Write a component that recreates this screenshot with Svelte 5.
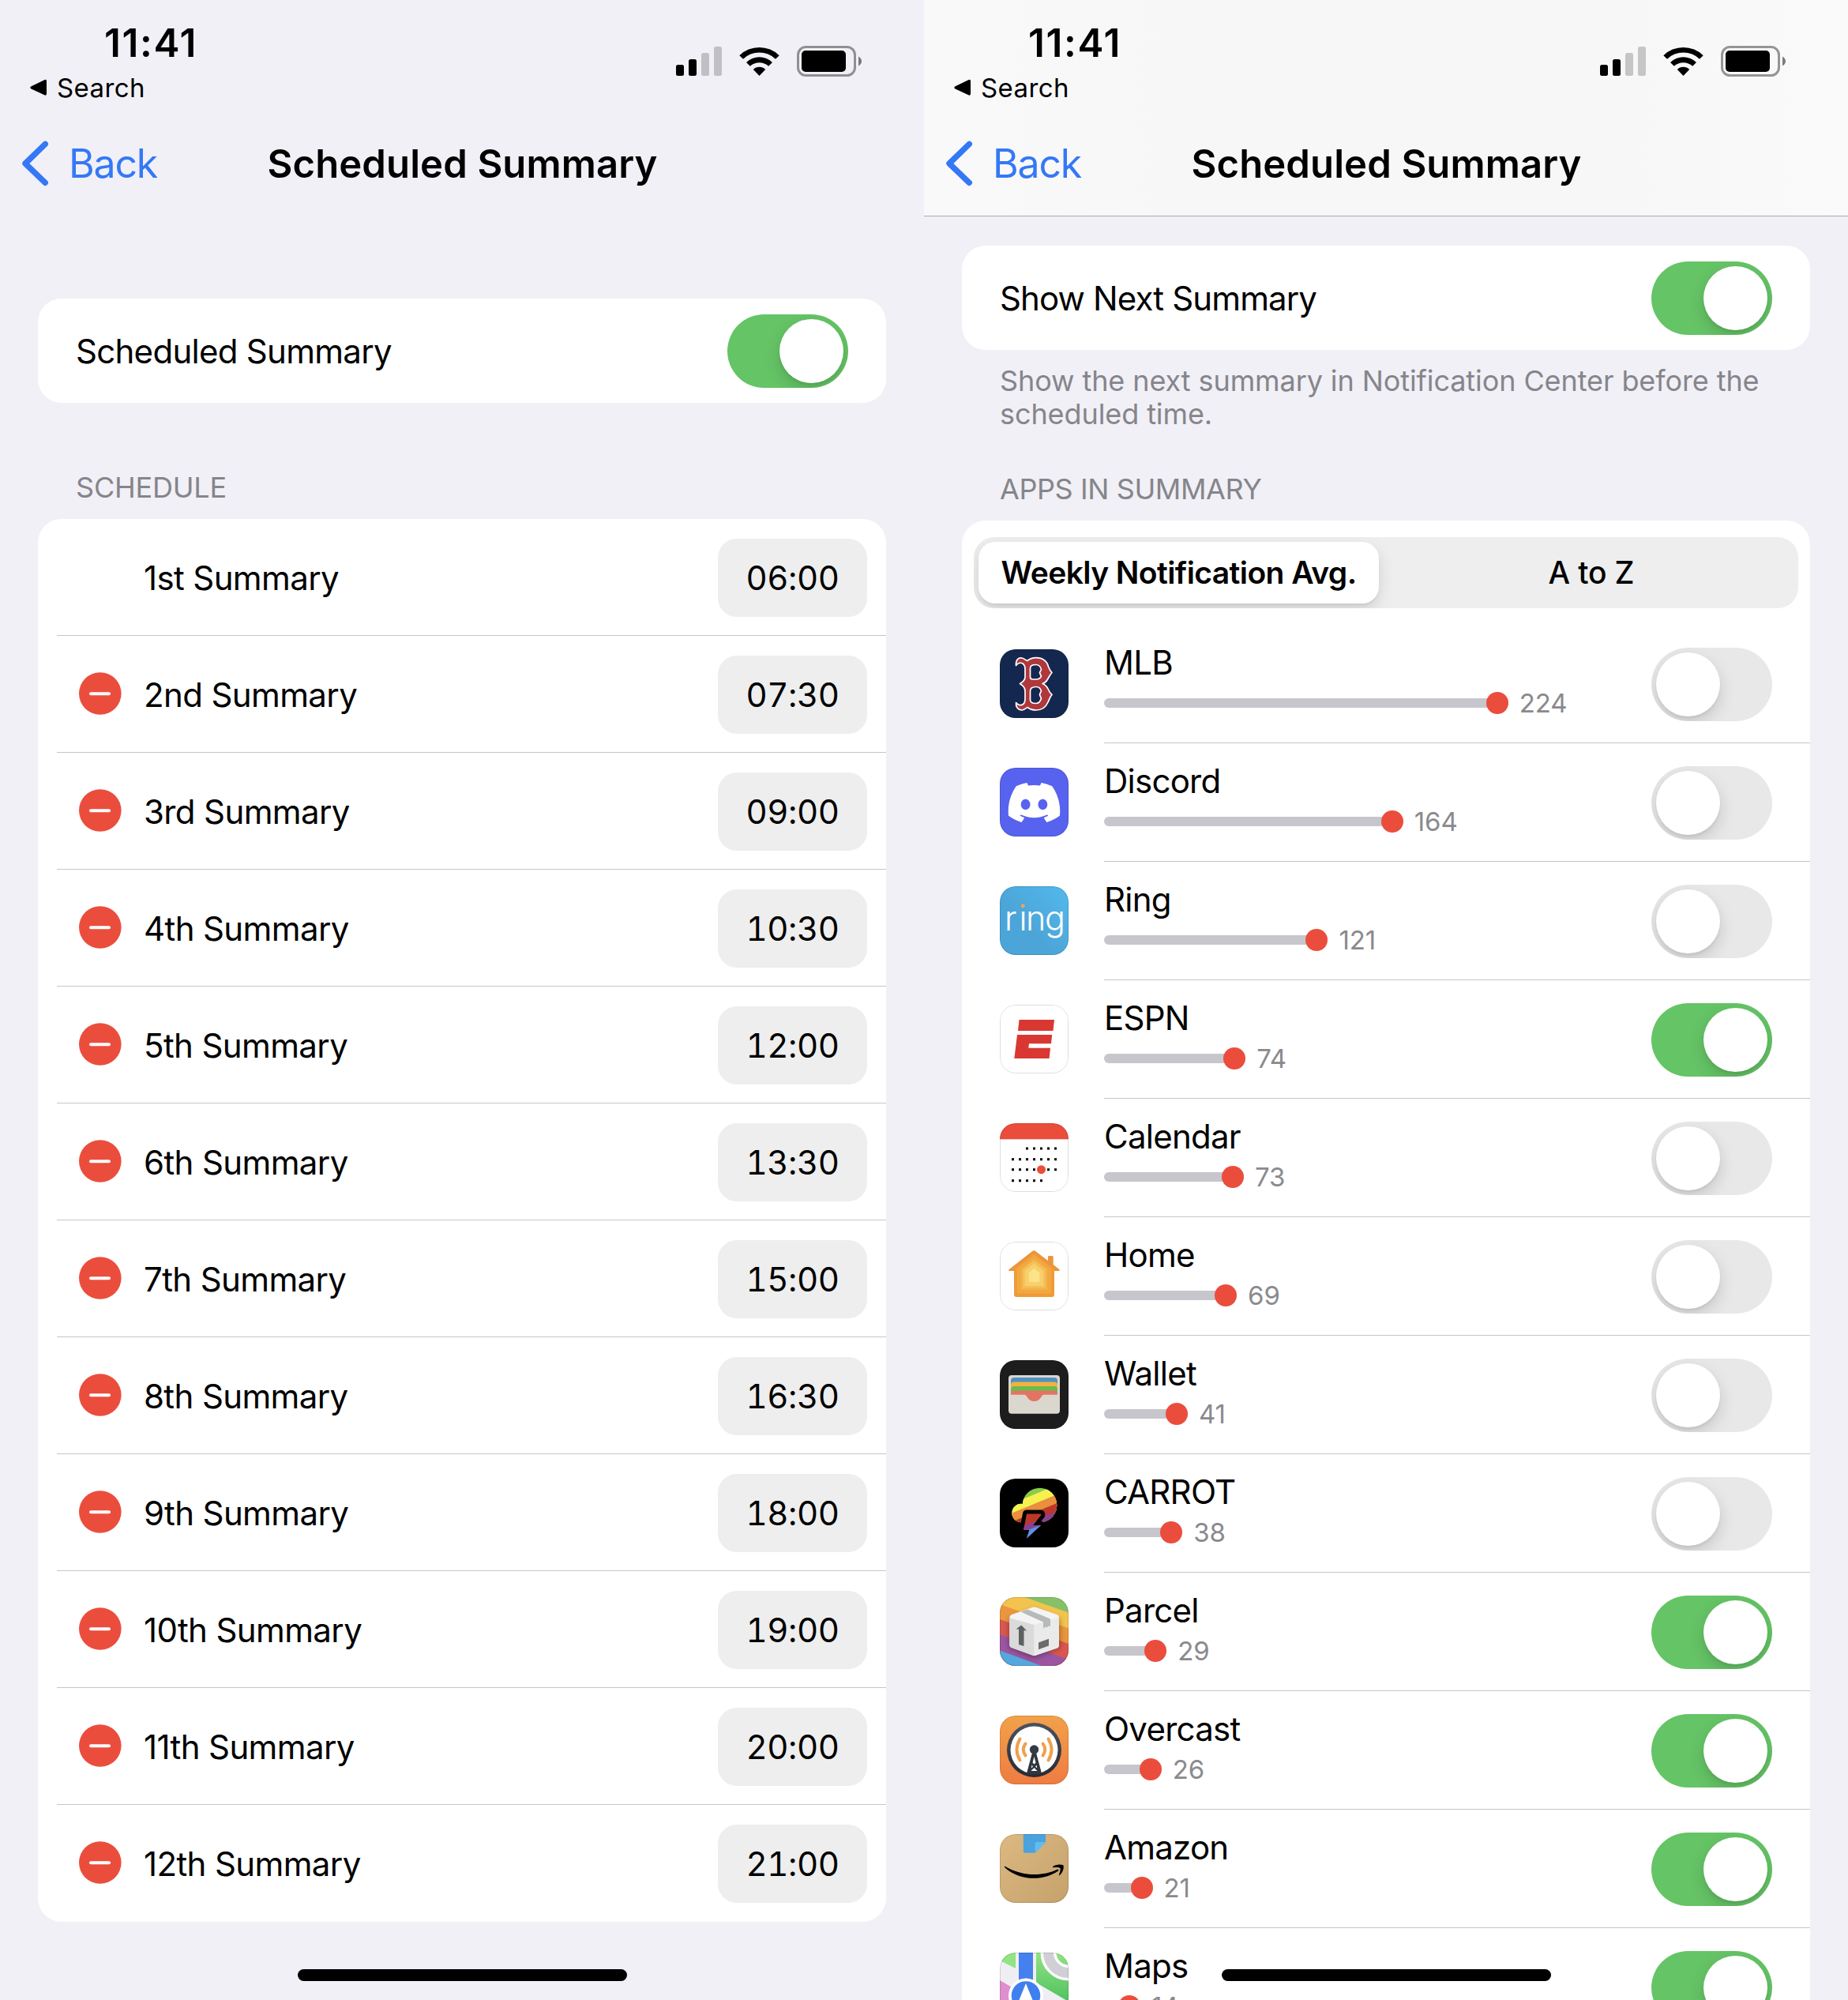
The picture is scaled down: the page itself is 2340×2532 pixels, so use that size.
<script>
  const schedule = [
    ['1st Summary', '06:00'],
    ['2nd Summary', '07:30'],
    ['3rd Summary', '09:00'],
    ['4th Summary', '10:30'],
    ['5th Summary', '12:00'],
    ['6th Summary', '13:30'],
    ['7th Summary', '15:00'],
    ['8th Summary', '16:30'],
    ['9th Summary', '18:00'],
    ['10th Summary', '19:00'],
    ['11th Summary', '20:00'],
    ['12th Summary', '21:00'],
  ];

  const apps = [
    { name: 'MLB', count: 224, on: false },
    { name: 'Discord', count: 164, on: false },
    { name: 'Ring', count: 121, on: false },
    { name: 'ESPN', count: 74, on: true },
    { name: 'Calendar', count: 73, on: false },
    { name: 'Home', count: 69, on: false },
    { name: 'Wallet', count: 41, on: false },
    { name: 'CARROT', count: 38, on: false },
    { name: 'Parcel', count: 29, on: true },
    { name: 'Overcast', count: 26, on: true },
    { name: 'Amazon', count: 21, on: true },
    { name: 'Maps', count: 14, on: true },
  ];

  // Dots printed on the Calendar icon: [x, y] of each day
  const calendarDots = [];
  const ranges = [[2, 6], [0, 6], [0, 6], [0, 4]];
  ranges.forEach(([from, to], row) => {
    for (let col = from; col <= to; col++) {
      if (!(row === 2 && col === 4)) calendarDots.push([16.5 + col * 9, [32, 45.7, 58.7, 72.7][row]]);
    }
  });

  // Length of the grey line, up to the far edge of its 28px end dot
  const barWidth = (count) => count * 2.218 + 15;
</script>

{#snippet header(raised)}
  <header class:raised>
    <div class="status">
      <div class="left">
        <div class="clock">11:41</div>
        <div class="crumb">
          <svg width="22" height="22" viewBox="0 0 22 22"><path d="M1.6 9.2 18.2 1.2Q21 0 21 3V18.600Q21 21.600 18.200 20.300L1.600 12.500Q-1 10.900 1.600 9.200Z" /></svg>
          <span>Search</span>
        </div>
      </div>
      <svg class="radio" width="238" height="40" viewBox="0 0 238 40">
        <rect x="0" y="24" width="10" height="14" rx="2.500" />
        <rect x="16" y="17" width="10" height="21" rx="2.500" />
        <rect x="32" y="9" width="10" height="29" rx="2.500" opacity=".2" />
        <rect x="48" y="1" width="10" height="37" rx="2.500" opacity=".2" />
        <path d="M80.300 12.200A36 36 0 0 1 130.700 12.200L126 16.800A29.300 29.300 0 0 0 85 16.800Z" />
        <path d="M89 21A23.500 23.500 0 0 1 122 21L117.200 25.800A17 17 0 0 0 93.800 25.800Z" />
        <path d="M97.800 30A11 11 0 0 1 113.200 30L105.500 38Z" />
        <rect x="154.500" y="1.500" width="72" height="36" rx="10" fill="none" stroke="#000" stroke-opacity=".4" stroke-width="3" />
        <rect x="159" y="6" width="56" height="27" rx="5" />
        <path d="M231 13.500Q235 16 235 19.500Q235 23 231 25.500Z" opacity=".5" />
      </svg>
    </div>
    <nav>
      <div class="back">
        <svg width="34" height="58" viewBox="0 0 34 58"><path d="M29.300 4.300 4 29 29.300 53.300" fill="none" stroke="#3478f6" stroke-width="7.400" stroke-linecap="round" stroke-linejoin="round" /></svg>
        <span>Back</span>
      </div>
      <h1>Scheduled Summary</h1>
    </nav>
  </header>
{/snippet}

{#snippet toggle(on)}
  <span class="toggle" class:on><span class="knob"></span></span>
{/snippet}

{#snippet icon(name)}
  <svg class="icon" width="87" height="87" viewBox="0 0 87 87">
    {#if name === 'MLB'}
      <rect width="87" height="87" fill="#14284f" />
      <path fill="#b0383c" stroke="#fff" stroke-width="1.700" stroke-linejoin="round" fill-rule="evenodd" d="M20.500 20.500C20 13 24 10 28 11C31 11.600 32.500 14 35 14.500C38 12 42 10.700 46 10.700C54 10.700 60 15 61.500 22C63 26 64.500 28 66 29.500C63.500 32 62.500 35 60.500 38C59 41 57 42.500 54 43.500C58 45 60 47.500 61.500 51C63 54.500 64 56 66 57.500C63.500 60 62.500 64 61 67C58 74 53 77 46 77C42 77 38 76 35 73.500C32.500 74.500 31 77 28 77C23 77 20 73 20.500 67.500C23 71 27 71.500 29.500 69.500C31.500 68 32 66 32 63V53C32 48 29 46 25.500 43.500C29 41.500 32 39 32 35V25C32 22 31 19.500 29 18C26 16.500 22.500 17.500 20.500 20.500ZM38.500 24V35C38.500 37 39.500 38 41.500 38H46C49 38 51.500 36.500 52.500 34C51.500 32.500 51 31.500 50.500 29.500C51 28 51.800 27 52.500 25.500C51.500 21.500 49 19.500 45.500 19.500C41 19.500 38.500 21 38.500 24ZM38.500 53V64C38.500 67 41 68.500 45.500 68.500C49 68.500 51.500 66 52.500 62C51.800 60.500 51 59.500 50.500 57.500C51 55.500 51.500 54.500 52.500 53C51.500 49 49 47.500 46 47.500C41.500 47.500 38.500 49 38.500 53Z" />
    {:else if name === 'Discord'}
      <rect width="87" height="87" fill="#5762ee" />
      <path fill="#fff" transform="translate(10.700 11.200) scale(2.730)" d="M20.317 4.3698a19.7913 19.7913 0 00-4.8851-1.5152.0741.0741 0 00-.0785.0371c-.211.3753-.4447.8648-.6083 1.2495-1.8447-.2762-3.68-.2762-5.4868 0-.1636-.3933-.4058-.8742-.6177-1.2495a.077.077 0 00-.0785-.037 19.7363 19.7363 0 00-4.8852 1.515.0699.0699 0 00-.0321.0277C.5334 9.0458-.319 13.5799.0992 18.0578a.0824.0824 0 00.0312.0561c2.0528 1.5076 4.0413 2.4228 5.9929 3.0294a.0777.0777 0 00.0842-.0276c.4616-.6304.8731-1.2952 1.226-1.9942a.076.076 0 00-.0416-.1057c-.6528-.2476-1.2743-.5495-1.8722-.8923a.077.077 0 01-.0076-.1277c.1258-.0943.2517-.1923.3718-.2914a.0743.0743 0 01.0776-.0105c3.9278 1.7933 8.18 1.7933 12.0614 0a.0739.0739 0 01.0785.0095c.1202.099.246.1981.3728.2924a.077.077 0 01-.0066.1276 12.2986 12.2986 0 01-1.873.8914.0766.0766 0 00-.0407.1067c.3604.698.7719 1.3628 1.225 1.9932a.076.076 0 00.0842.0286c1.961-.6067 3.9495-1.5219 6.0023-3.0294a.077.077 0 00.0313-.0552c.5004-5.177-.8382-9.6739-3.5485-13.6604a.061.061 0 00-.0312-.0286zM8.02 15.3312c-1.1825 0-2.1569-1.0857-2.1569-2.419 0-1.3332.9555-2.4189 2.157-2.4189 1.2108 0 2.1757 1.0952 2.1568 2.419 0 1.3332-.9555 2.4189-2.1569 2.4189zm7.9748 0c-1.1825 0-2.1569-1.0857-2.1569-2.419 0-1.3332.9554-2.4189 2.1569-2.4189 1.2108 0 2.1757 1.0952 2.1568 2.419 0 1.3332-.946 2.4189-2.1568 2.4189Z" />
    {:else if name === 'Ring'}
      <defs><linearGradient id="ring-bg" x1="0" y1="1" x2="1" y2="0"><stop offset=".4" stop-color="#4ca5d8" /><stop offset="1" stop-color="#53b9ec" /></linearGradient></defs>
      <rect width="87" height="87" fill="url(#ring-bg)" />
      <text class="ring" x="6 24.6 33 57" y="55.500">ring</text>
      <circle cx="29.300" cy="24.300" r="4.200" fill="#4da7da" />
      <circle cx="29.300" cy="24.800" r="2.500" fill="#eda35c" />
    {:else if name === 'ESPN'}
      <rect width="87" height="87" fill="#fff" />
      <path fill="#d93832" d="M24.500 19H69L67.500 33H23ZM22 38H66.200L65 49.300H37L36.300 54.800H64L62.600 68H18.300Z" />
    {:else if name === 'Calendar'}
      <rect width="87" height="87" fill="#fff" />
      <rect width="87" height="20.300" fill="#eb4d3d" />
      {#each calendarDots as [x, y]}<rect x={x - 1.5} y={y - 1.5} width="3" height="3" />{/each}
      <circle cx="52.500" cy="58.700" r="5.500" fill="#eb4d3d" />
    {:else if name === 'Home'}
      <rect width="87" height="87" fill="#fff" />
      <path fill="#ea953b" d="M43.500 10.800 61 24V19Q61 18 62 18H66.700Q67.700 18 67.700 19V29L75.500 35.300Q76.500 37 74.500 37H69V45H18V37H12.500Q10.500 37 11.500 35.300L40.500 12.500Q43.500 10 46.500 12.500Z" />
      <path fill="#f09a38" d="M18 34 43.500 14 69 34V67Q69 70 66 70H21Q18 70 18 67Z" />
      <path fill="#f1a840" d="M22 33.500 43.500 16.500 65 33.500V63.500Q65 65.500 63 65.500H24Q22 65.500 22 63.500Z" />
      <path fill="#f3b247" d="M26.700 34.500 43.500 21.500 60.300 34.500V61H26.700Z" />
      <path fill="#f5c05a" d="M29 35 43.500 23.500 58 35V58.500H29Z" />
      <path fill="#f8cf6b" d="M31.700 37 43.500 27.500 55 37V56H31.700Z" />
      <path fill="#fbe38a" d="M36.700 39.500 43.500 33.500 50.300 39.500V51H36.700Z" />
    {:else if name === 'Wallet'}
      <rect width="87" height="87" fill="#1d1d1d" />
      <rect x="11" y="19" width="65" height="48.700" rx="4" fill="#dad7cf" />
      <path fill="#4c93c4" d="M14 26Q14 22 18 22H69Q73 22 73 26V32H14Z" />
      <path fill="#f3b13f" d="M14 31.500Q14 27.500 18 27.500H69Q73 27.500 73 31.500V37H14Z" />
      <path fill="#6abc4d" d="M14 37Q14 33 18 33H69Q73 33 73 37V42H14Z" />
      <path fill="#e37463" d="M14 42Q14 38.500 18 38.500H69Q73 38.500 73 42V43.700H56C52 43.700 52 52 43.500 52C35 52 35 43.700 31 43.700H14Z" />
    {:else if name === 'CARROT'}
      <defs>
        <clipPath id="cloud"><circle cx="50.500" cy="33.500" r="21.800" /><circle cx="27" cy="43.500" r="11.700" /><rect x="27" y="38" width="26" height="17.200" /></clipPath>
        <clipPath id="bolt"><path d="M34 44.500H51Q53 44.500 52 46.500L42 59H52L34 75.600 37.500 65H30Z" /></clipPath>
      </defs>
      <rect width="87" height="87" />
      <g clip-path="url(#cloud)">
        <rect width="87" height="87" fill="#8bcb4b" />
        <path d="M0 38 87 2V87H0Z" fill="#f6f151" />
        <path d="M0 50 87 14V87H0Z" fill="#e98f3e" />
        <path d="M0 61 87 25V87H0Z" fill="#bb3828" />
        <path d="M0 71 87 35V87H0Z" fill="#8a3f92" />
      </g>
      <path d="M34 44.500H51Q53 44.500 52 46.500L42 59H52L34 75.600 37.500 65H30Z" stroke="#000" stroke-width="10" stroke-linejoin="round" />
      <g clip-path="url(#bolt)">
        <rect width="87" height="87" fill="#bb3828" />
        <path d="M0 71 87 38V87H0Z" fill="#8a3f92" />
        <path d="M0 78 87 46V87H0Z" fill="#5794e8" />
      </g>
    {:else if name === 'Parcel'}
      <defs><filter id="parcel-shadow" x="-30%" y="-30%" width="160%" height="160%"><feGaussianBlur stdDeviation="3.500" /></filter></defs>
      <rect width="87" height="87" fill="#86c067" />
      <path d="M0 -11 87 19.500V87H0Z" fill="#f2c34f" />
      <path d="M0 9 87 39.500V87H0Z" fill="#ea963f" />
      <path d="M0 28 87 59V87H0Z" fill="#d9574f" />
      <path d="M0 47 87 79V87H0Z" fill="#9c55a1" />
      <path d="M0 67.500 53 87H0Z" fill="#55a8dd" />
      <path d="M12 28 43 16 76 28V64L43 77 12 64Z" opacity=".35" filter="url(#parcel-shadow)" />
      <path d="M12.300 26Q12.300 23 15 22L41 13Q43.500 12 46 13L72.500 22Q75 23 75 26V61Q75 63.500 72.500 64.500L46 73.500Q43.500 74.500 41 73.500L15 64Q12.300 63 12.300 60.500Z" fill="#f4f4f4" />
      <path d="M12.300 25Q13 26 15 27L43.500 35V74.200Q42 74 41 73.500L15 64Q12.300 63 12.300 60.500Z" fill="#d9dad9" />
      <path d="M75 25Q74 26 72.500 26.500L43.500 35V74.200Q45 74 46 73.500L72.500 64.500Q75 63.500 75 61Z" fill="#e9eae9" />
      <path d="M26.500 18.500 35 15.500 64 27.500V37L61.500 36.500 59.500 38.500 57.500 37.500 55 40V31.500Z" fill="#b7baba" />
      <path d="M27.300 35.500 34 42.500 30.500 42V62L24 60V40.500L20.500 40.500Z" fill="#5d6060" />
      <path d="M49 57.500 62 52.700V61.500L49 66.200Z" fill="#6b6d6d" />
    {:else if name === 'Overcast'}
      <defs>
        <linearGradient id="oc-bg" x2="0" y2="1"><stop stop-color="#f2a14a" /><stop offset="1" stop-color="#ee7c41" /></linearGradient>
        <linearGradient id="oc-ring" x2="0" y2="1"><stop stop-color="#4a525d" /><stop offset="1" stop-color="#272b33" /></linearGradient>
      </defs>
      <rect width="87" height="87" fill="url(#oc-bg)" />
      <circle cx="43.500" cy="43.500" r="34.500" fill="url(#oc-ring)" />
      <circle cx="43.500" cy="43.500" r="30" fill="#fff" />
      <path fill="#30353f" fill-rule="evenodd" d="M41.300 46H45.700L53 73Q43.500 76 34 73ZM43.500 52 41.500 59.500 43.500 61.500 45.500 59.500ZM40.500 62.500 39.700 66.500 42 64.500ZM46.500 62.500 45 64.500 47.300 66.500ZM43.500 66 39.500 70H47.500Z" />
      <circle cx="43.500" cy="43" r="5.700" fill="#353b46" />
      <g fill="none" stroke="#f0a04b" stroke-width="4" stroke-linecap="round">
        <path d="M32.500 35.500Q27 43 32.500 50.500M54.500 35.500Q60 43 54.500 50.500M25.500 29.500Q17.500 43 25.500 56.500M61.500 29.500Q69.500 43 61.500 56.500" />
      </g>
    {:else if name === 'Amazon'}
      <defs><linearGradient id="az-bg" x2="1" y2="1"><stop stop-color="#dcb981" /><stop offset="1" stop-color="#c5a26c" /></linearGradient></defs>
      <rect width="87" height="87" fill="url(#az-bg)" />
      <path d="M29.800 0H58V10L44.700 23.700H31.300Q29.800 23.700 29.800 22.200Z" fill="#4ca2dc" />
      <path d="M58 10H46.500Q44.700 10 44.700 12V23.700Z" fill="#5fbdf5" />
      <path d="M6 40.500C28 53.500 54 54 72.500 44.800Q75.500 44.300 74 46.500C54 60.500 24 58.500 6.300 42.200Q5.500 41 6 40.500Z" />
      <path d="M67 41.200C70 38.500 76 37.800 80 39Q81 40 80.800 42C80.500 46 78.500 50 75.500 52.300Q74.500 52.300 75 51C76.500 47.500 77 44.500 76.500 43C74.500 41.700 71 41.800 68 42.300Q66.500 42.300 67 41.200Z" />
    {:else}
      <defs><linearGradient id="map-green" x2="0" y2="1"><stop stop-color="#92e383" /><stop offset="1" stop-color="#50c160" /></linearGradient></defs>
      <rect width="87" height="87" fill="#efeff3" />
      <path d="M0 0H20V20L0 10Z" fill="#92e383" />
      <path d="M46 0H87V62L46 38Z" fill="url(#map-green)" />
      <path d="M0 35 22 48V87H0Z" fill="#de8fcd" />
      <circle cx="87" cy="0" r="25.500" fill="none" stroke="#fff" stroke-width="20" />
      <circle cx="87" cy="0" r="25.500" fill="none" stroke="#cfcfd5" stroke-width="13" />
      <rect x="24" width="18" height="60" fill="#4581ee" />
      <circle cx="33" cy="54.500" r="22" fill="#fff" />
      <circle cx="33" cy="54.500" r="18.300" fill="#3f80ee" />
      <path d="M33 39 44 66 33 61 22 66Z" fill="#fff" />
    {/if}
    <rect x=".5" y=".5" width="86" height="86" rx="19.500" fill="none" stroke="#000" stroke-opacity=".13" />
  </svg>
{/snippet}

<main>
  <section class="phone">
    {@render header(false)}
    <div class="card single first"><span>Scheduled Summary</span>{@render toggle(true)}</div>
    <h2 class="schedule-title">SCHEDULE</h2>
    <div class="card">
      {#each schedule as [label, time], i}
        <div class="slot">
          <span class="remove">
            {#if i > 0}
              <svg width="54" height="54" viewBox="0 0 54 54"><circle cx="26.800" cy="27" r="26.800" fill="#eb4d3d" /><rect x="13" y="25.300" width="27" height="4" rx="2" fill="#fff" /></svg>
            {/if}
          </span>
          <span class="label">{label}</span>
          <span class="time">{time}</span>
        </div>
      {/each}
    </div>
    <div class="home-bar"></div>
  </section>

  <section class="phone">
    {@render header(true)}
    <div class="card single next"><span>Show Next Summary</span>{@render toggle(true)}</div>
    <p class="note">Show the next summary in Notification Center before the scheduled time.</p>
    <h2 class="apps-title">APPS IN SUMMARY</h2>
    <div class="card apps">
      <div class="segments">
        <span class="segment selected">Weekly Notification Avg.</span>
        <span class="segment">A to Z</span>
      </div>
      {#each apps as app}
        <div class="app">
          {@render icon(app.name)}
          <div class="info">
            <div class="stats">
              <div class="name">{app.name}</div>
              <div class="usage">
                <div class="bar" style:width="{barWidth(app.count)}px"><i></i></div>
                <span>{app.count}</span>
              </div>
            </div>
            {@render toggle(app.on)}
          </div>
        </div>
      {/each}
    </div>
    <div class="home-bar"></div>
  </section>
</main>

<style>
  :global(body) {
    margin: 0;
    background: #f1f0f6;
  }

  main {
    display: flex;
    width: 2340px;
    height: 2532px;
    overflow: hidden;
    font-family: Inter, 'Liberation Sans', sans-serif;
    color: #000;
  }

  .phone {
    position: relative;
    display: flex;
    flex-direction: column;
    width: 1170px;
    height: 2532px;
    overflow: hidden;
    background: #f1f0f6;
  }

  header {
    flex: none;
    box-sizing: border-box;
    height: 274px;
  }

  header.raised {
    border-bottom: 1px solid #a9a9ad;
    background: linear-gradient(90deg, #faf9fa, #f7f7f7 30%, #f7f7f7 75%, #fafafb);
  }

  .status {
    display: flex;
    justify-content: space-between;
    box-sizing: border-box;
    height: 141px;
    padding: 24px 76px 0 38px;
  }

  .clock {
    margin-left: 94px;
    font-size: 49.5px;
    font-weight: 600;
    line-height: 60px;
    letter-spacing: 1.6px;
  }

  .crumb {
    display: flex;
    align-items: center;
    gap: 12px;
    margin-top: 7px;
    font-size: 33px;
    line-height: 40px;
    letter-spacing: 0.4px;
  }

  .radio {
    margin-top: 34px;
  }

  nav {
    display: grid;
    grid-template-columns: 1fr auto 1fr;
    align-items: center;
    height: 132px;
  }

  .back {
    display: flex;
    align-items: center;
    gap: 25px;
    padding-left: 28px;
    color: #3478f6;
    font-size: 50px;
    line-height: 60px;
    letter-spacing: -1.2px;
  }

  h1 {
    margin: 1px 0 0 1px;
    font-size: 49px;
    font-weight: 600;
    line-height: 60px;
    letter-spacing: 0.12px;
  }

  h2 {
    flex: none;
    color: #85858b;
    font-size: 36px;
    font-weight: 400;
    line-height: 42px;
    letter-spacing: -0.4px;
  }

  .schedule-title {
    margin: 86px 96px 19px;
    letter-spacing: -0.2px;
  }

  .apps-title {
    margin: 53px 96px 19px;
  }

  .card {
    flex: none;
    margin: 0 48px;
    overflow: hidden;
    border-radius: 30px;
    background: #fff;
  }

  .single {
    display: flex;
    align-items: center;
    justify-content: space-between;
    box-sizing: border-box;
    height: 132px;
    padding: 0 48px;
    font-size: 42px;
    letter-spacing: -0.72px;
  }

  .first {
    margin-top: 104px;
  }

  .next {
    margin-top: 37px;
    letter-spacing: -0.87px;
  }

  .single > span:first-child {
    padding-top: 1px;
  }

  .toggle {
    flex: none;
    box-sizing: border-box;
    display: flex;
    width: 153px;
    height: 93px;
    padding: 6px;
    overflow: hidden;
    border-radius: 47px;
    background: #e8e8e8;
  }

  .toggle.on {
    justify-content: flex-end;
    background: #65c466;
  }

  .knob {
    width: 81px;
    height: 81px;
    border-radius: 50%;
    background: #fff;
    box-shadow: 0 8px 20px rgba(0, 0, 0, 0.15), 0 3px 3px rgba(0, 0, 0, 0.05);
  }

  .slot {
    display: flex;
    align-items: center;
    box-sizing: border-box;
    height: 148px;
    margin-left: 24px;
    padding: 1px 24px 0 28px;
    border-bottom: 1px solid #c6c6c8;
    font-size: 42px;
  }

  .slot:last-child {
    border-bottom-color: transparent;
  }

  .remove {
    width: 54px;
    height: 56px;
  }

  .label {
    flex: 1;
    margin-left: 28px;
    letter-spacing: -0.62px;
  }

  .time {
    width: 189px;
    border-radius: 24px;
    background: #eee;
    line-height: 99px;
    text-align: center;
    font-variant-numeric: tabular-nums;
    letter-spacing: -0.4px;
  }

  .note {
    margin: 18px 96px 0;
    color: #85858b;
    font-size: 36px;
    line-height: 42px;
    letter-spacing: -0.09px;
  }

  .apps {
    box-sizing: border-box;
    padding-top: 21px;
  }

  .segments {
    display: flex;
    box-sizing: border-box;
    height: 90px;
    margin: 0 15px 21px;
    padding: 6px;
    overflow: hidden;
    border-radius: 26px;
    background: #eee;
    font-size: 39px;
    font-weight: 500;
    line-height: 78px;
    letter-spacing: -0.18px;
    text-align: center;
  }

  .segment {
    flex: 1;
    padding-left: 13px;
  }

  .segment.selected {
    flex: none;
    width: 507px;
    padding-left: 0;
    border-radius: 21px;
    background: #fff;
    box-shadow: 0 8px 20px rgba(0, 0, 0, 0.12), 0 3px 3px rgba(0, 0, 0, 0.05);
    font-weight: 600;
    letter-spacing: -0.58px;
  }

  .app {
    display: flex;
    align-items: center;
    height: 150px;
    padding-left: 48px;
  }

  .icon {
    flex: none;
    margin-right: 45px;
    margin-bottom: 1px;
    border-radius: 20px;
  }

  .ring {
    fill: #fff;
    font-size: 43px;
    font-weight: 300;
  }

  .info {
    flex: 1;
    display: flex;
    align-items: center;
    justify-content: space-between;
    box-sizing: border-box;
    height: 150px;
    padding: 2px 48px 0 0;
    border-bottom: 1px solid #c6c6c8;
  }

  .stats {
    padding-bottom: 5px;
  }

  .name {
    font-size: 42px;
    line-height: 52px;
    letter-spacing: -0.75px;
  }

  .usage {
    display: flex;
    align-items: center;
    gap: 14px;
    height: 50px;
    color: #8a8a8e;
    font-size: 33px;
    line-height: 40px;
    letter-spacing: -0.1px;
  }

  .bar {
    display: flex;
    align-items: center;
    justify-content: flex-end;
    height: 12px;
    border-radius: 6px;
    background: #c7c6cc;
  }

  .bar i {
    width: 28px;
    height: 28px;
    border-radius: 50%;
    background: #eb4d3d;
  }

  .home-bar {
    position: absolute;
    left: 377px;
    bottom: 24px;
    width: 417px;
    height: 15px;
    border-radius: 8px;
    background: #000;
  }
</style>
